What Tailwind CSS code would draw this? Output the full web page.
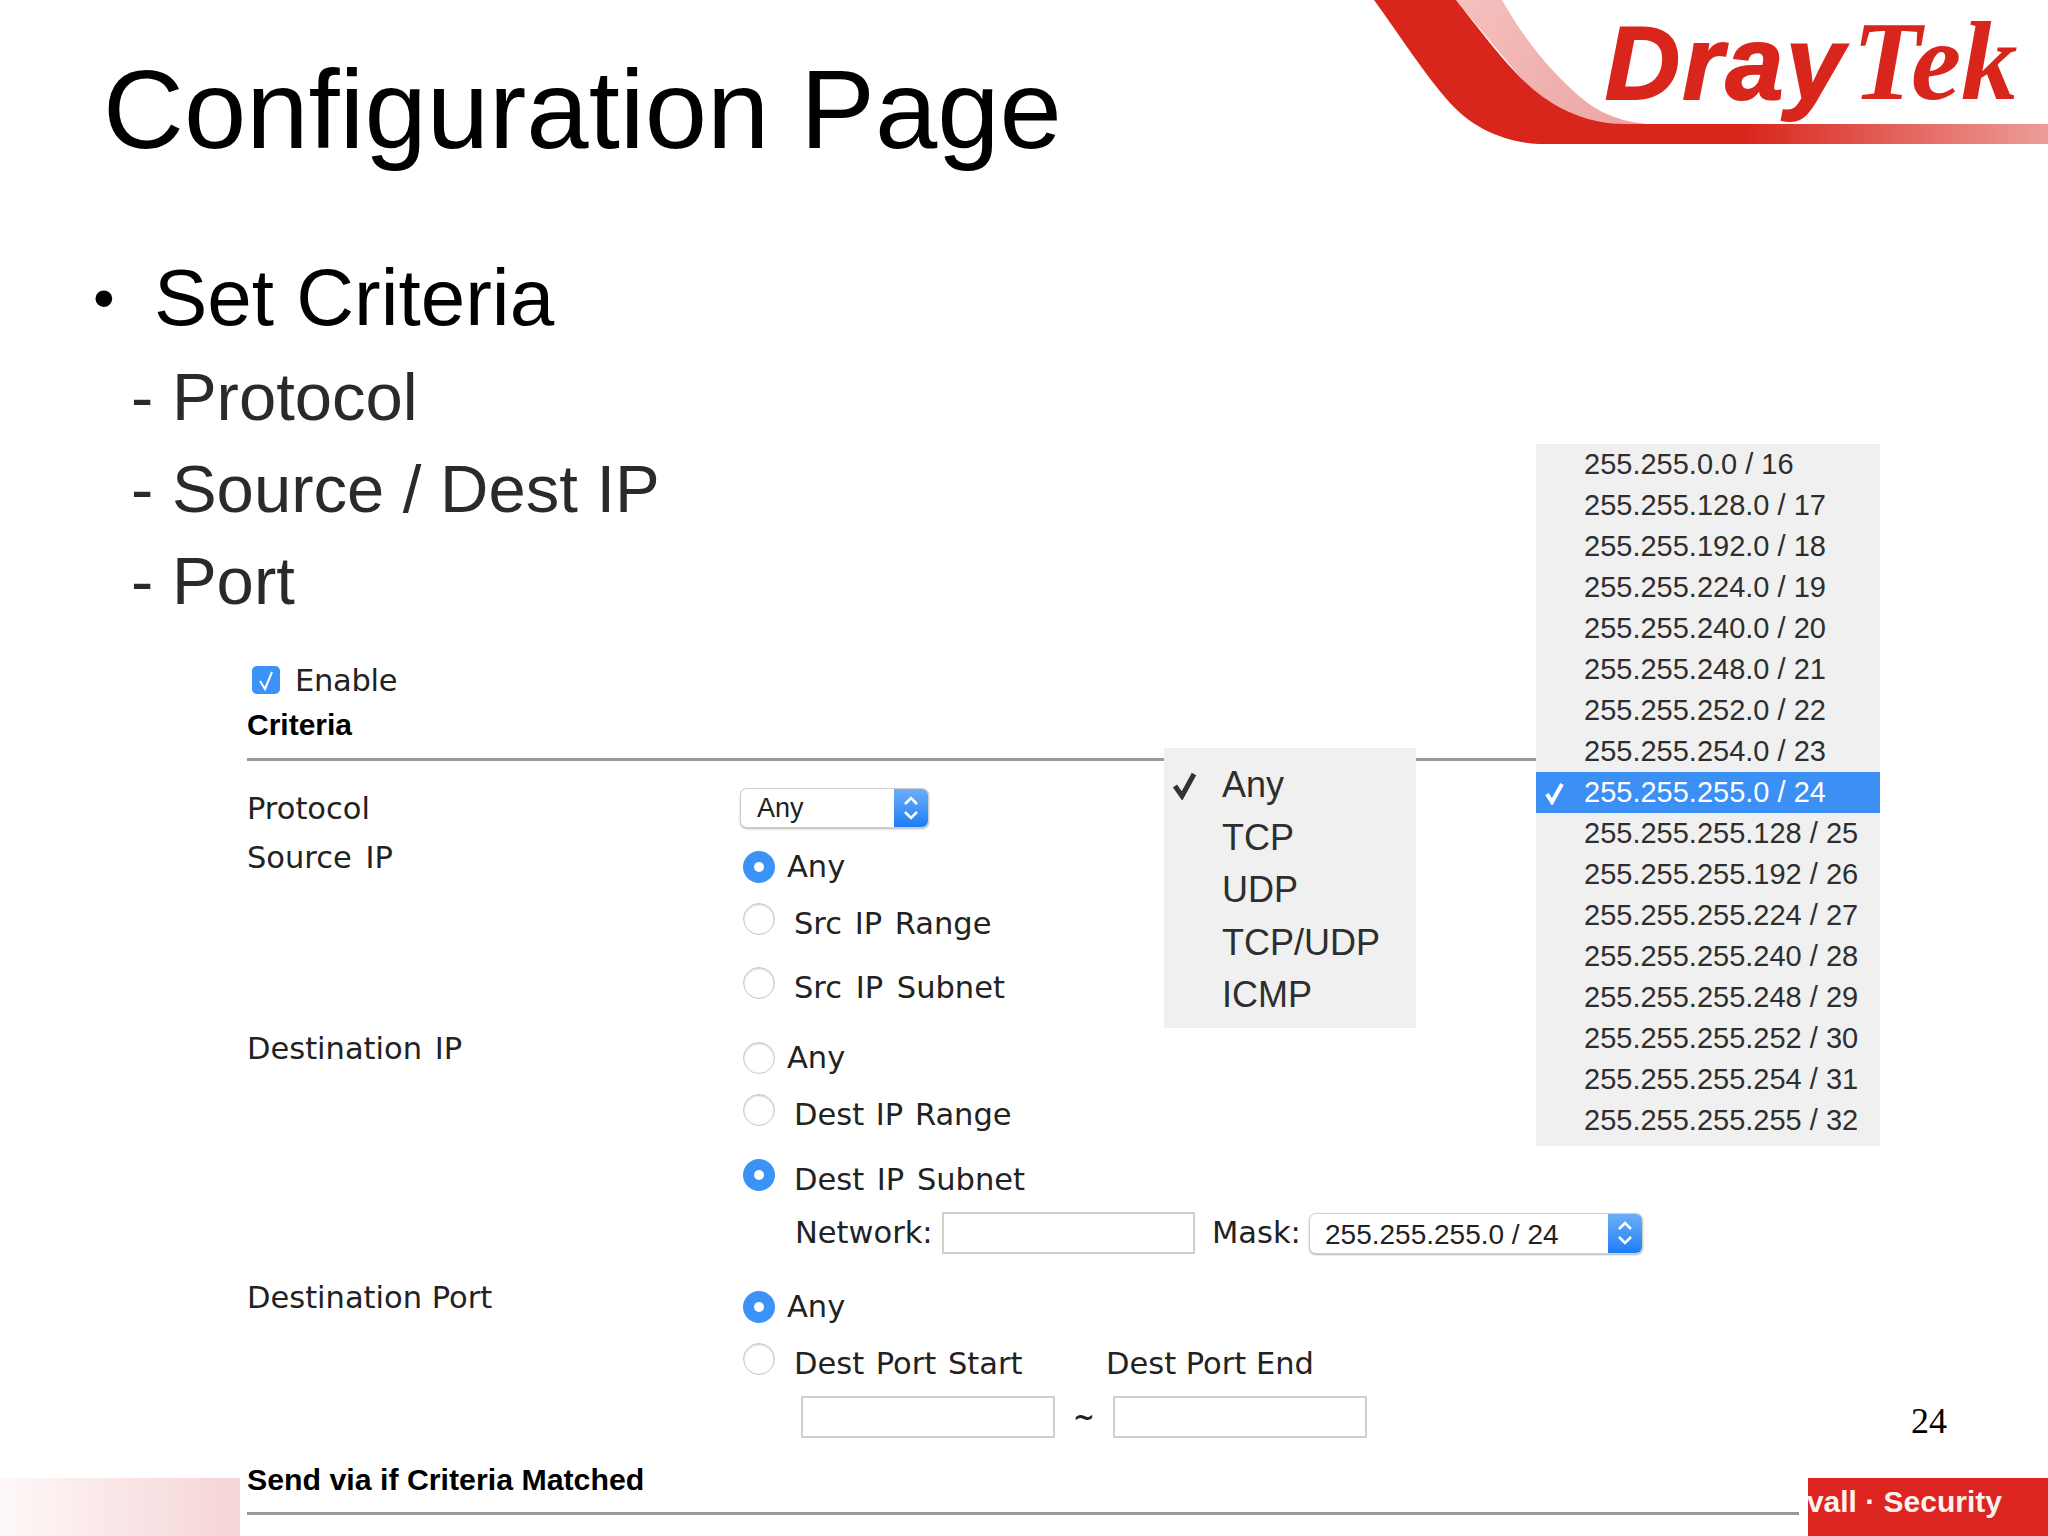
<!DOCTYPE html>
<html>
<head>
<meta charset="utf-8">
<script src="https://cdn.jsdelivr.net/npm/@tailwindcss/browser@4"></script>
</head>
<body class="bg-white">
<div class="relative w-[2048px] h-[1536px] overflow-hidden bg-white text-black font-['Liberation_Sans',Arial,sans-serif]">

  <!-- logo -->
  <div class="absolute left-[1340px] top-0 w-[708px] h-[160px]">
    <svg class="w-full h-full" viewBox="1340 0 708 160" fill="none">
      <defs>
        <linearGradient id="band" x1="1340" x2="2048" y1="0" y2="0" gradientUnits="userSpaceOnUse">
          <stop offset="0.57" stop-color="#d9261c"/>
          <stop offset="1" stop-color="#ec9d98"/>
        </linearGradient>
        <linearGradient id="pink" x1="1470" x2="1640" y1="0" y2="120" gradientUnits="userSpaceOnUse">
          <stop offset="0" stop-color="#f4bfbd"/>
          <stop offset="1" stop-color="#eca5a2"/>
        </linearGradient>
      </defs>
      <path d="M1456 0 L1502 0 C1525 40 1550 72 1584 100 C1605 117 1630 124 1662 125 L1560 125 Z" fill="url(#pink)"/>
      <path d="M1374 0 L1456 0 C1480 30 1515 78 1543 97 C1563 111 1590 124 1625 124 L2048 124 L2048 144 L1539 144 C1500 142 1470 125 1450 103 C1425 75 1400 36 1374 0 Z" fill="url(#band)"/>
    </svg>
    <div class="absolute left-[265px] top-[9px] flex items-baseline text-[#d9261c]">
      <span class="text-[104px] leading-[104px] font-bold italic tracking-[2.5px] [-webkit-text-stroke:2px_#d9261c]">Dray</span>
      <span class="ml-[6px] text-[113px] leading-[104px] font-bold italic font-['Liberation_Serif',serif]">Tek</span>
    </div>
  </div>

  <!-- heading and bullets -->
  <h1 class="pt-[45px] pl-[103px] h-[172px] text-[112px] leading-[130px] font-normal">Configuration Page</h1>
  <div class="mt-[76px] flex items-center h-[100px] text-[80px] leading-[100px]">
    <span class="w-[154px] pl-[93px] text-[62px]">•</span><span>Set Criteria</span>
  </div>
  <ul class="mt-[3px] pl-[131px] text-[67px] leading-[92px] text-[#2a2a2a]">
    <li class="h-[92px]">- Protocol</li>
    <li class="h-[92px]">- Source / Dest IP</li>
    <li class="h-[92px]">- Port</li>
  </ul>

  <!-- form -->
  <div class="mt-[30px] pl-[247px] text-[30.5px] leading-[40px] text-[#222] font-['DejaVu_Sans',Verdana,sans-serif]">
    <div class="flex items-center h-[46px]">
      <span class="ml-[5px] w-[28px] h-[28px] rounded-[5px] bg-[#3b93f7] flex items-center justify-center">
        <svg class="w-[20px] h-[24px]" viewBox="0 0 20 24" fill="none"><path d="M4 13 L9 21 L16 4" stroke="#fff" stroke-width="2"/></svg>
      </span>
      <span class="ml-[15px] pt-[2px] tracking-[-0.3px]">Enable</span>
    </div>
    <div class="h-[44px] text-[30px] leading-[44px] font-bold text-black font-['Liberation_Sans',Arial,sans-serif]">Criteria</div>
    <div class="mt-[11px] w-[1289px] h-[3px] bg-[#999]"></div>

    <!-- protocol -->
    <div class="mt-[27px] flex items-center h-[40px]">
      <span class="w-[493px] pt-[2px]">Protocol</span>
      <div class="w-[189px] h-[40px] flex rounded-[7px] bg-white border border-[#d0d0d0] shadow-[0_1px_2px_rgba(0,0,0,0.3)] overflow-hidden">
        <span class="flex-1 pl-[16px] text-[27px] leading-[38px] font-['Liberation_Sans',Arial,sans-serif]">Any</span>
        <span class="w-[34px] bg-gradient-to-b from-[#6aaef8] to-[#1a7df5] flex items-center justify-center">
          <svg class="w-[18px] h-[28px]" viewBox="0 0 18 28" fill="none" stroke="#fff" stroke-width="2.5"><path d="M3 10 L9 4 L15 10"/><path d="M3 18 L9 24 L15 18"/></svg>
        </span>
      </div>
    </div>

    <!-- source ip -->
    <div class="mt-[9px] grid grid-cols-[496px_1fr]">
      <div class="pt-[1px] [word-spacing:4px]">Source IP</div>
      <div class="flex flex-col">
        <div class="mt-[10px] flex items-center h-[40px]">
          <span class="w-[32px] h-[32px] rounded-full bg-[#3b93f7] flex items-center justify-center"><span class="w-[10px] h-[10px] rounded-full bg-white"></span></span>
          <span class="ml-[12px]">Any</span>
        </div>
        <div class="mt-[16px] flex items-center h-[40px]">
          <span class="mb-[8px] w-[32px] h-[32px] rounded-full bg-white border border-[#c8c8c8] shadow-[inset_0_1px_2px_rgba(0,0,0,0.2)]"></span>
          <span class="ml-[19px] pt-[2px] [word-spacing:3px]">Src IP Range</span>
        </div>
        <div class="mt-[24px] flex items-center h-[40px]">
          <span class="mb-[8px] w-[32px] h-[32px] rounded-full bg-white border border-[#c8c8c8] shadow-[inset_0_1px_2px_rgba(0,0,0,0.2)]"></span>
          <span class="ml-[19px] pt-[2px] [word-spacing:4px]">Src IP Subnet</span>
        </div>
      </div>
    </div>

    <!-- destination ip -->
    <div class="mt-[21px] grid grid-cols-[496px_1fr]">
      <div class="pt-[1px] [word-spacing:3px]">Destination IP</div>
      <div class="flex flex-col">
        <div class="mt-[10px] flex items-center h-[40px]">
          <span class="w-[32px] h-[32px] rounded-full bg-white border border-[#c8c8c8] shadow-[inset_0_1px_2px_rgba(0,0,0,0.2)]"></span>
          <span class="ml-[12px]">Any</span>
        </div>
        <div class="mt-[16px] flex items-center h-[40px]">
          <span class="mb-[8px] w-[32px] h-[32px] rounded-full bg-white border border-[#c8c8c8] shadow-[inset_0_1px_2px_rgba(0,0,0,0.2)]"></span>
          <span class="ml-[19px] pt-[2px] [word-spacing:2px]">Dest IP Range</span>
        </div>
        <div class="mt-[25px] flex items-center h-[40px]">
          <span class="mb-[8px] w-[32px] h-[32px] rounded-full bg-[#3b93f7] flex items-center justify-center"><span class="w-[10px] h-[10px] rounded-full bg-white"></span></span>
          <span class="ml-[19px] pt-[2px] [word-spacing:3px]">Dest IP Subnet</span>
        </div>
        <div class="mt-[13px] flex items-center h-[42px] pl-[52px]">
          <span class="w-[147px]">Network:</span>
          <span class="w-[253px] h-[42px] bg-white border-2 border-[#d0d0d0]"></span>
          <span class="ml-[17px] w-[97px]">Mask:</span>
          <div class="w-[334px] h-[41px] flex rounded-[7px] bg-white border border-[#d0d0d0] shadow-[0_1px_2px_rgba(0,0,0,0.3)] overflow-hidden">
            <span class="flex-1 pl-[15px] text-[28px] leading-[41px] font-['Liberation_Sans',Arial,sans-serif]">255.255.255.0 / 24</span>
            <span class="w-[34px] bg-gradient-to-b from-[#6aaef8] to-[#1a7df5] flex items-center justify-center">
              <svg class="w-[18px] h-[28px]" viewBox="0 0 18 28" fill="none" stroke="#fff" stroke-width="2.5"><path d="M3 10 L9 4 L15 10"/><path d="M3 18 L9 24 L15 18"/></svg>
            </span>
          </div>
        </div>
      </div>
    </div>

    <!-- destination port -->
    <div class="mt-[23px] grid grid-cols-[496px_1fr]">
      <div class="pt-[1px]">Destination Port</div>
      <div class="flex flex-col">
        <div class="mt-[10px] flex items-center h-[40px]">
          <span class="w-[32px] h-[32px] rounded-full bg-[#3b93f7] flex items-center justify-center"><span class="w-[10px] h-[10px] rounded-full bg-white"></span></span>
          <span class="ml-[12px]">Any</span>
        </div>
        <div class="mt-[16px] flex items-center h-[40px]">
          <span class="mb-[8px] w-[32px] h-[32px] rounded-full bg-white border border-[#c8c8c8] shadow-[inset_0_1px_2px_rgba(0,0,0,0.2)]"></span>
          <span class="ml-[19px] pt-[2px] w-[312px] [word-spacing:2px]">Dest Port Start</span>
          <span class="pt-[2px]">Dest Port End</span>
        </div>
        <div class="mt-[13px] flex items-center h-[42px] pl-[58px]">
          <span class="w-[254px] h-[42px] bg-white border-2 border-[#d0d0d0]"></span>
          <span class="w-[58px] text-center text-[26px] font-bold">~</span>
          <span class="w-[254px] h-[42px] bg-white border-2 border-[#d0d0d0]"></span>
        </div>
      </div>
    </div>

    <div class="relative z-10 mt-[22px] h-[40px] text-[30.3px] font-bold text-black font-['Liberation_Sans',Arial,sans-serif]">Send via if Criteria Matched</div>
    <div class="relative z-10 mt-[12px] w-[1552px] h-[3px] bg-[#999]"></div>
  </div>

  <!-- protocol menu -->
  <div class="absolute left-[1164px] top-[748px] w-[252px] h-[280px] pt-[11px] bg-[#f0f0f0] text-[36px] leading-[52.5px] text-[#2e2e2e]">
    <div class="flex items-center">
      <svg class="ml-[8px] w-[26px] h-[30px] text-[#333]" viewBox="0 0 26 30" fill="none"><path d="M3 16 L10 26 L22 4" stroke="currentColor" stroke-width="5"/></svg>
      <span class="ml-[24px]">Any</span>
    </div>
    <div class="pl-[58px]">TCP</div>
    <div class="pl-[58px]">UDP</div>
    <div class="pl-[58px]">TCP/UDP</div>
    <div class="pl-[58px]">ICMP</div>
  </div>

  <!-- mask menu -->
  <div class="absolute left-[1536px] top-[444px] w-[344px] h-[702px] bg-[#f0f0f0] text-[29px] leading-[41px] text-[#2e2e2e]">
    <div class="pl-[48px] h-[41px]">255.255.0.0 / 16</div>
    <div class="pl-[48px] h-[41px]">255.255.128.0 / 17</div>
    <div class="pl-[48px] h-[41px]">255.255.192.0 / 18</div>
    <div class="pl-[48px] h-[41px]">255.255.224.0 / 19</div>
    <div class="pl-[48px] h-[41px]">255.255.240.0 / 20</div>
    <div class="pl-[48px] h-[41px]">255.255.248.0 / 21</div>
    <div class="pl-[48px] h-[41px]">255.255.252.0 / 22</div>
    <div class="pl-[48px] h-[41px]">255.255.254.0 / 23</div>
    <div class="flex items-center h-[41px] bg-[#3b8ff5] text-white">
      <svg class="ml-[8px] w-[22px] h-[24px]" viewBox="0 0 22 24" fill="none"><path d="M3 13 L8 21 L18 3" stroke="#fff" stroke-width="4"/></svg>
      <span class="ml-[18px]">255.255.255.0 / 24</span>
    </div>
    <div class="pl-[48px] h-[41px]">255.255.255.128 / 25</div>
    <div class="pl-[48px] h-[41px]">255.255.255.192 / 26</div>
    <div class="pl-[48px] h-[41px]">255.255.255.224 / 27</div>
    <div class="pl-[48px] h-[41px]">255.255.255.240 / 28</div>
    <div class="pl-[48px] h-[41px]">255.255.255.248 / 29</div>
    <div class="pl-[48px] h-[41px]">255.255.255.252 / 30</div>
    <div class="pl-[48px] h-[41px]">255.255.255.254 / 31</div>
    <div class="pl-[48px] h-[41px]">255.255.255.255 / 32</div>
  </div>

  <!-- slide number -->
  <div class="absolute left-[1911px] top-[1400px] text-[36px] leading-[42px] font-['Liberation_Serif',serif]">24</div>

  <!-- footer strips -->
  <div class="absolute left-0 top-[1478px] w-[240px] h-[58px] bg-gradient-to-r from-[#fef8f8] to-[#f5d4d6]"></div>
  <div class="absolute left-[1808px] top-[1478px] w-[240px] h-[58px] bg-[#dc2420] overflow-hidden flex justify-end pr-[46px] text-[30px] leading-[48px] font-bold text-[#fdf1ee] whitespace-nowrap">vall · Security</div>
</div>
</body>
</html>
